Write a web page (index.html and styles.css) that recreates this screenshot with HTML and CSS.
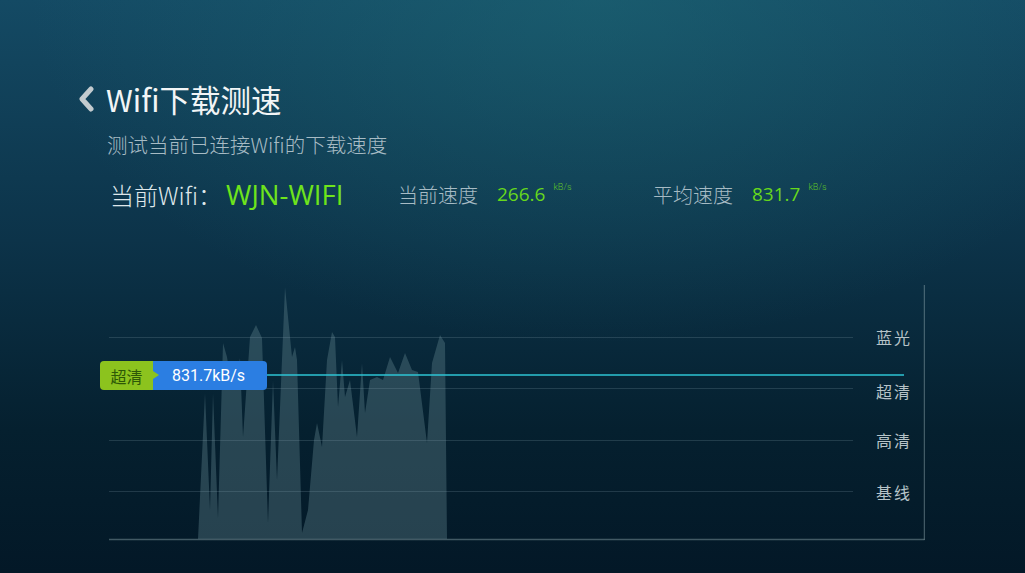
FILE: index.html
```html
<!DOCTYPE html>
<html lang="zh-CN">
<head>
    <meta charset="UTF-8">
    <meta name="viewport" content="width=device-width, initial-scale=1.0">
    <title>Wifi下载测速</title>
    <link rel="stylesheet" href="styles.css">
</head>
<body>
    <div id="page">
        <div class="header">
            <svg class="back" width="20" height="26" viewBox="0 0 20 26">
                <polyline points="14,3 5,13 14,23" fill="none" stroke="#c3cbcf" stroke-width="5" stroke-linecap="round" stroke-linejoin="round"/>
            </svg>
            <h1>Wifi下载测速</h1>
        </div>
        <p class="subtitle">测试当前已连接Wifi的下载速度</p>

        <div class="info">
            <div class="wifi">当前Wifi：<span class="ssid">WJN-WIFI</span></div>
            <div class="speed speed-now">当前速度<span class="num">266.6</span><sup>kB/s</sup></div>
            <div class="speed speed-avg">平均速度<span class="num">831.7</span><sup>kB/s</sup></div>
        </div>

        <div id="chart">
            <svg width="825" height="265" viewBox="100 280 825 265">
                <!-- download curve -->
                <path class="area" d="M198,539 L205,393 L210,510 L213,393 L218,518 L223,343 L227,357 L232,390 L236,380 L240,358 L243,437 L250,337 L256,325 L262,338 L268,523 L273,380 L277,480 L285,287 L292,357 L295,347 L297,360 L302,533 L308,510 L314,440 L317,423 L322,447 L327,360 L332,332 L335,337 L338,407 L342,360 L345,397 L350,380 L357,437 L362,363 L365,413 L370,380 L377,377 L383,380 L390,357 L398,373 L405,353 L412,370 L418,372 L427,443 L432,363 L440,335 L445,343 L447,539 Z"/>
                <!-- grid -->
                <line class="grid" x1="109" y1="337.5" x2="853" y2="337.5"/>
                <line class="grid" x1="109" y1="388.5" x2="853" y2="388.5"/>
                <line class="grid" x1="109" y1="440.5" x2="853" y2="440.5"/>
                <line class="grid" x1="109" y1="491.5" x2="853" y2="491.5"/>
                <line class="axis" x1="109" y1="539.5" x2="924.5" y2="539.5"/>
                <line class="axis" x1="924.5" y1="285" x2="924.5" y2="540"/>
                <line class="avg" x1="265" y1="375" x2="904" y2="375"/>
                <text class="lvl" x="876" y="344">蓝光</text>
                <text class="lvl" x="876" y="398">超清</text>
                <text class="lvl" x="876" y="447">高清</text>
                <text class="lvl" x="876" y="499">基线</text>
            </svg>
            <div class="badge">
                <span class="tag">超清</span>
                <span class="val">831.7kB/s</span>
            </div>
        </div>
    </div>
</body>
</html>
```

FILE: styles.css
```css
html, body {
    margin: 0;
    height: 100%;
}
body {
    width: 1025px;
    height: 573px;
    overflow: hidden;
    font-family: "Noto Sans CJK SC", "Noto Sans", sans-serif;
    color: #fff;
    background:
        radial-gradient(ellipse 55% 60% at 58% 0%, rgba(32, 112, 122, 0.45), rgba(32, 112, 122, 0) 100%),
        linear-gradient(180deg, #144a64 0%, #0c3349 42%, #05202f 75%, #031827 100%);
}
#page {
    padding: 81px 0 0 77px;
}
.header {
    display: flex;
    align-items: center;
    gap: 9px;
}
.back {
    display: block;
}
h1 {
    margin: 0;
    font-size: 30.5px;
    line-height: 36px;
    font-weight: 400;
    color: #f2f5f6;
}
.subtitle {
    margin: 13px 0 0 30px;
    font-size: 20.5px;
    line-height: 28px;
    color: #a7bbc4;
    font-weight: 300;
}
.info {
    display: flex;
    align-items: center;
    margin: 18px 0 0 33px;
    height: 36px;
}
.wifi {
    font-size: 24px;
    color: #dfe7ea;
    font-weight: 300;
    width: 288px;
}
.ssid {
    font-family: "Open Sans", "Noto Sans", sans-serif;
    font-size: 27.5px;
    font-weight: 400;
    color: #6ee41c;
    margin-left: 4px;
}
.speed {
    font-size: 20px;
    color: #a7bbc4;
    font-weight: 300;
    display: flex;
    align-items: center;
}
.speed-now {
    width: 255px;
}
.num {
    font-family: "Open Sans", "Noto Sans", sans-serif;
    font-weight: 400;
    color: #66d81c;
    font-size: 19px;
    margin-left: 19px;
}
sup {
    font-family: "Roboto", sans-serif;
    font-size: 9px;
    color: #5cbf2a;
    align-self: flex-start;
    margin: 2px 0 0 8px;
}
#chart {
    position: relative;
    margin: 68px 0 0 23px;
    width: 825px;
    height: 265px;
}
#chart svg {
    display: block;
}
.area {
    fill: #5d7f8a;
    fill-opacity: 0.4;
}
.grid {
    stroke: #8aa6b0;
    stroke-opacity: 0.22;
    stroke-width: 1;
}
.axis {
    stroke: #8ea6ae;
    stroke-opacity: 0.45;
    stroke-width: 1.5;
}
.avg {
    stroke: #2ec5d4;
    stroke-width: 1.6;
}
.lvl {
    fill: #b6c3c8;
    font-family: "Noto Sans CJK SC", sans-serif;
    font-size: 16px;
    letter-spacing: 2px;
}
.badge {
    position: absolute;
    left: 0;
    top: 81px;
    display: flex;
    height: 29px;
    font-family: "Roboto", "Noto Sans CJK SC", sans-serif;
    font-size: 16px;
}
.tag {
    position: relative;
    background: #8cc31e;
    color: #2d5807;
    width: 53px;
    border-radius: 4px 0 0 4px;
    display: flex;
    align-items: center;
    justify-content: center;
    font-family: "Noto Sans CJK SC", sans-serif;
}
.tag::after {
    content: "";
    position: absolute;
    right: -6px;
    top: 10px;
    border-left: 6px solid #8cc31e;
    border-top: 4px solid transparent;
    border-bottom: 4px solid transparent;
}
.val {
    background: #2b7ee2;
    color: #fff;
    width: 114px;
    border-radius: 0 4px 4px 0;
    display: flex;
    align-items: center;
    padding-left: 19px;
    box-sizing: border-box;
}
```
